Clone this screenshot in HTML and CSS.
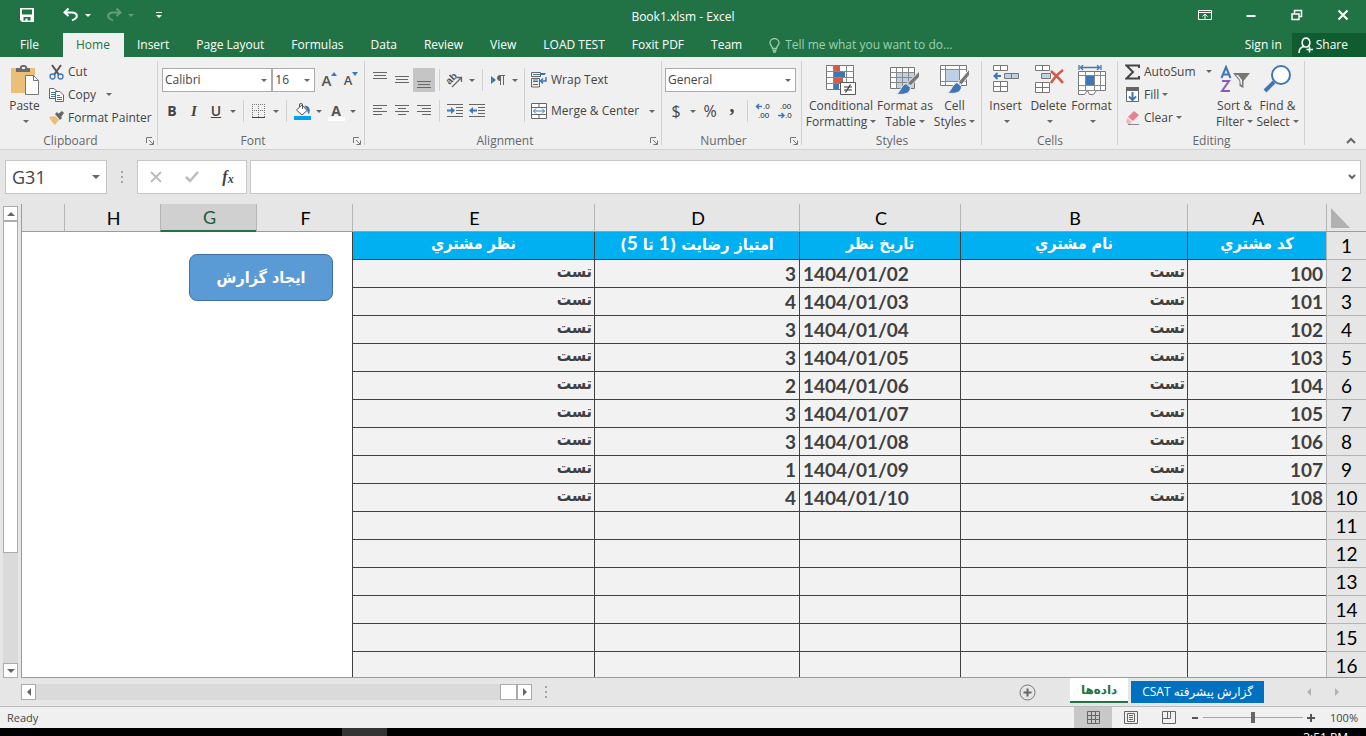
FILE: index.html
```html
<!DOCTYPE html>
<html lang="en">
<head>
  <meta charset="UTF-8" />
  <meta name="viewport" content="width=device-width, initial-scale=1" />
  <title>Book1.xlsm - Excel</title>
  <link rel="stylesheet" href="styles.css">
</head>
<body>
  <header class="top">
    <div class="titlebar">
      <div class="quick">
        <button aria-label="Save"><svg width="16" height="16" viewBox="0 0 16 16"><path fill="#fff" fill-rule="evenodd" d="M1 1h14v14H3L1 13zM3 2.500v5h10v-5zM4.500 10v3.500h2V11.500h2v2h3V10z"/></svg></button>
        <button class="undo" aria-label="Undo"><svg width="18" height="16" viewBox="0 0 18 16"><path fill="none" stroke="#fff" stroke-width="2" d="M6.500 1.500L2.500 5.500l4 3.500M3 5.500h7c5 0 6 4 3.500 6L10 13.500"/></svg></button>
        <button class="drop" aria-label="Undo list"><i class="caret"></i></button>
        <button class="faded redo" aria-label="Redo"><svg width="18" height="16" viewBox="0 0 18 16"><path fill="none" stroke="#fff" stroke-width="2" d="M11.500 1.500l4 4-4 3.500M15 5.500H8c-5 0-6 4-3.500 6L8 13.500"/></svg></button>
        <button class="drop faded" aria-label="Redo list"><i class="caret"></i></button>
        <button class="custom" aria-label="Customize toolbar"><svg width="8" height="8" viewBox="0 0 8 8"><path fill="#fff" d="M1 1h6v1H1zM1 4h6L4 7z"/></svg></button>
      </div>
      <div class="doc-name">Book1.xlsm - Excel</div>
      <div class="window-buttons">
        <button aria-label="Ribbon display"><svg width="14" height="12" viewBox="0 0 14 12"><path fill="none" stroke="#fff" d="M.5 1.500h13v9H.5zM.5 3.500h13M7 10V5.500M4.500 7.500L7 5l2.500 2.500"/></svg></button>
        <button aria-label="Minimize"><svg width="10" height="10" viewBox="0 0 10 10"><path fill="#fff" d="M.5 5h9v2h-9z"/></svg></button>
        <button aria-label="Restore"><svg width="12" height="12" viewBox="0 0 12 12"><path fill="none" stroke="#fff" stroke-width="1.500" d="M1 5h7v5.500H1zM3.500 5V1.500h7v6H8"/></svg></button>
        <button aria-label="Close"><svg width="12" height="12" viewBox="0 0 12 12"><path stroke="#fff" stroke-width="2" d="M1.500 1.500l9 9M10.500 1.500l-9 9"/></svg></button>
      </div>
    </div>

    <nav class="tabs">
      <button class="file">File</button>
      <button class="active">Home</button>
      <button>Insert</button>
      <button>Page Layout</button>
      <button>Formulas</button>
      <button>Data</button>
      <button>Review</button>
      <button>View</button>
      <button>LOAD TEST</button>
      <button>Foxit PDF</button>
      <button>Team</button>
      <button class="tell"><svg width="11" height="15" viewBox="0 0 11 15"><path fill="none" stroke="#9fd0b2" stroke-width="1.300" d="M3.500 10.500C3.500 8 1 7.500 1 5a4.500 4.300 0 0 1 9 0c0 2.500-2.500 3-2.500 5.500zM3.500 12.500h4M4 14.200h3"/></svg>Tell me what you want to do...</button>
      <button class="signin">Sign in</button>
      <button class="share"><svg width="16" height="17" viewBox="0 0 16 17"><path fill="none" stroke="#fff" stroke-width="1.500" d="M1 16c0-4 2-6 5-6.500M8 1a4 4.500 0 0 1 2 8.300M8 1a4 4.500 0 0 0-2 8.300c1 .7 3 .7 4 0M11.500 9.500v6M8.500 12.500h6.500"/></svg>Share</button>
    </nav>
  </header>

  <section class="ribbon" aria-label="Ribbon">
    <div class="group clipboard">
      <div class="group-body">
        <button class="big paste">
          <svg width="30" height="30" viewBox="0 0 30 30"><path fill="#eac078" d="M1 3h24v25H1z"/><path fill="#6b6b6b" d="M6 7V3h4V1.500L12 0h3l2 1.500V3h3v4z"/><path fill="#f0f0f0" d="M12 2h3v2h-3z"/><path fill="#fff" stroke="#777" d="M15.500 10.500h8l5 5v14h-13z"/><path fill="none" stroke="#777" d="M23.500 10.500v5h5"/></svg>
          <span>Paste</span><span><i class="caret"></i></span>
        </button>
        <div class="stack">
          <button class="small"><svg width="15" height="16" viewBox="0 0 15 16"><path stroke="#555" stroke-width="2" d="M3 1l7 10M12 1L5 11"/><circle cx="3.500" cy="12.500" r="2.500" fill="none" stroke="#3f77b5" stroke-width="1.300"/><circle cx="11.500" cy="12.500" r="2.500" fill="none" stroke="#3f77b5" stroke-width="1.300"/></svg>Cut</button>
          <button class="small"><svg width="15" height="16" viewBox="0 0 15 16"><path fill="#fff" stroke="#666" d="M.5 1.500H5l2.500 2.500v7.500h-7z"/><path stroke="#3f77b5" d="M2 5.500h4M2 7.500h4M2 9.500h4"/><path fill="#fff" stroke="#666" d="M6.500 4.500H11L14.500 8v6.500h-8z"/><path stroke="#3f77b5" d="M8 8.500h3M8 10.500h5M8 12.500h5"/></svg>Copy<i class="caret far"></i></button>
          <button class="small"><svg width="15" height="16" viewBox="0 0 15 16"><path fill="#eac078" d="M0 7l6-1 4 4-4 5-3-3z"/><path fill="#666" d="M6 4l2-2 5 6-2 2zM9 4l4-3 2 2-3 4z"/></svg>Format Painter</button>
        </div>
      </div>
      <div class="group-label">Clipboard<button class="launch" aria-label="Clipboard settings"><svg width="8" height="8" viewBox="0 0 8 8"><path fill="none" stroke="#777" d="M.5 6V.5H6M3 3l4 4M7.500 3.500v4h-4"/></svg></button></div>
    </div>

    <div class="group font">
      <div class="group-body rows">
        <div class="row">
          <span class="pick face"><select aria-label="Font"><option>Calibri</option></select></span><span class="pick size"><select aria-label="Font size"><option>16</option></select></span>
          <button class="ico grow" aria-label="Increase font size">A<svg width="6" height="4" viewBox="0 0 6 4"><path fill="#3f77b5" d="M0 4l3-4 3 4z"/></svg></button>
          <button class="ico shrink" aria-label="Decrease font size">A<svg width="6" height="4" viewBox="0 0 6 4"><path fill="#3f77b5" d="M0 0l3 4 3-4z"/></svg></button>
        </div>
        <div class="row">
          <button class="ico bold" aria-label="Bold">B</button><button class="ico italic" aria-label="Italic">I</button><button class="ico under" aria-label="Underline">U</button><button class="drop" aria-label="Underline styles"><i class="caret"></i></button>
          <i class="sep"></i>
          <button class="ico" aria-label="Borders"><svg width="14" height="14" viewBox="0 0 14 14"><path fill="none" stroke="#777" stroke-dasharray="1 1" d="M.5 0v13M6.500 0v13M12.500 0v13M0 .5h13M0 6.500h13"/><path stroke="#444" d="M0 13.500h13"/></svg></button><button class="drop" aria-label="Border styles"><i class="caret"></i></button>
          <i class="sep"></i>
          <button class="ico" aria-label="Fill color"><svg width="17" height="17" viewBox="0 0 17 17"><path fill="#3f77b5" d="M10 3c5-1 7 3 5 8-2-1-1-5-5-8z"/><path fill="#fff" stroke="#555" d="M2.500 7l5.500-5 5 5.500L8 12z"/><path fill="none" stroke="#555" d="M5.500 4V1Q7 0 8.500 1v5"/><path fill="#00a2ed" d="M0 13h17v4H0z"/></svg></button><button class="drop" aria-label="Fill colors"><i class="caret"></i></button>
          <button class="ico color" aria-label="Font color">A</button><button class="drop" aria-label="Font colors"><i class="caret"></i></button>
        </div>
      </div>
      <div class="group-label">Font<button class="launch" aria-label="Font settings"><svg width="8" height="8" viewBox="0 0 8 8"><path fill="none" stroke="#777" d="M.5 6V.5H6M3 3l4 4M7.500 3.500v4h-4"/></svg></button></div>
    </div>

    <div class="group alignment">
      <div class="group-body">
        <div class="rows">
          <div class="row">
            <button class="ico" aria-label="Top align"><svg width="14" height="16" viewBox="0 0 14 16"><path stroke="#666" d="M0 .5h14M1 3.500h12M0 6.500h14"/></svg></button><button class="ico" aria-label="Middle align"><svg width="14" height="16" viewBox="0 0 14 16"><path stroke="#666" d="M0 4.500h14M1 7.500h12M0 10.500h14"/></svg></button><button class="ico on" aria-label="Bottom align"><svg width="14" height="16" viewBox="0 0 14 16"><path stroke="#666" d="M0 9.500h14M1 12.500h12M0 15.500h14"/></svg></button>
            <i class="sep"></i>
            <button class="ico" aria-label="Orientation"><svg width="20" height="20" viewBox="0 0 20 20"><text x="2" y="11" class="ab" transform="rotate(-45 8 10)">ab</text><path fill="none" stroke="#666" stroke-width="1.300" d="M7 17L16 8M12 7.500h4.500V12"/></svg></button><button class="drop" aria-label="Orientation list"><i class="caret"></i></button>
            <i class="sep"></i>
            <button class="ico" aria-label="Text direction"><svg width="14" height="12" viewBox="0 0 14 12"><path fill="#3f77b5" d="M0 2l5 4-5 4z"/><path fill="#666" d="M9 7C5 7 5 1 9 1h5v1h-1v9h-1V2h-2v9H9z"/></svg></button><button class="drop" aria-label="Text direction list"><i class="caret"></i></button>
          </div>
          <div class="row">
            <button class="ico" aria-label="Align left"><svg width="14" height="12" viewBox="0 0 14 12"><path stroke="#666" d="M0 .5h14M0 3.500h9M0 6.500h14M0 9.500h9"/></svg></button><button class="ico" aria-label="Center"><svg width="14" height="12" viewBox="0 0 14 12"><path stroke="#666" d="M0 .5h14M3 3.500h8M0 6.500h14M3 9.500h8"/></svg></button><button class="ico" aria-label="Align right"><svg width="14" height="12" viewBox="0 0 14 12"><path stroke="#666" d="M0 .5h14M5 3.500h9M0 6.500h14M5 9.500h9"/></svg></button>
            <i class="sep"></i>
            <button class="ico" aria-label="Decrease indent"><svg width="16" height="14" viewBox="0 0 16 14"><path stroke="#666" d="M0 .5h16M9 3.500h7M9 6.500h7M9 9.500h7M0 12.500h16"/><path fill="#3f77b5" d="M0 5.500h4V3l4 3.500L4 10V7.500H0z"/></svg></button><button class="ico" aria-label="Increase indent"><svg width="16" height="14" viewBox="0 0 16 14"><path stroke="#666" d="M0 .5h16M9 3.500h7M9 6.500h7M9 9.500h7M0 12.500h16"/><path fill="#3f77b5" d="M8 5.500H4V3L0 6.500 4 10V7.500h4z"/></svg></button>
          </div>
        </div>
        <div class="rows wrap">
          <button class="small"><svg width="16" height="16" viewBox="0 0 16 16"><path fill="none" stroke="#666" d="M.5.500h9v4h-9zM.5 6.500h8v8.500h-8zM9.500 1.500h5M2 9.500h5M2 12.500h5"/><path stroke="#3f77b5" d="M2 2.500h12M2 8h5"/><path fill="none" stroke="#3f77b5" stroke-width="1.500" d="M15 5v4h-5M12 6.500L9.500 9l2.500 2.500"/></svg>Wrap Text</button>
          <button class="small"><svg width="16" height="16" viewBox="0 0 16 16"><path fill="#fff" stroke="#666" d="M.5.5h15v15H.5zM.5 4.500h15M.5 11.500h15M8 .5v4M8 11.500v4"/><path fill="none" stroke="#3f77b5" d="M2.500 8h11M5 5.500L2.500 8 5 10.500M11 5.500L13.500 8 11 10.500"/></svg>Merge &amp; Center<i class="caret far"></i></button>
        </div>
      </div>
      <div class="group-label">Alignment<button class="launch" aria-label="Alignment settings"><svg width="8" height="8" viewBox="0 0 8 8"><path fill="none" stroke="#777" d="M.5 6V.5H6M3 3l4 4M7.500 3.500v4h-4"/></svg></button></div>
    </div>

    <div class="group number">
      <div class="group-body rows">
        <div class="row"><span class="pick format"><select aria-label="Number format"><option>General</option></select></span></div>
        <div class="row">
          <button class="ico sign" aria-label="Accounting format">$</button><button class="drop" aria-label="Currency list"><i class="caret"></i></button><button class="ico sign" aria-label="Percent">%</button><button class="ico comma" aria-label="Comma style">,</button>
          <i class="sep"></i>
          <button class="ico" aria-label="Increase decimal"><svg width="18" height="20" viewBox="0 0 18 20"><text x="9" y="8" class="dec">.0</text><text x="4" y="17" class="dec">.00</text><path fill="none" stroke="#3f77b5" stroke-width="1.500" d="M8 5.500H2M5 3L2.500 5.500 5 8"/></svg></button><button class="ico" aria-label="Decrease decimal"><svg width="18" height="20" viewBox="0 0 18 20"><text x="4" y="8" class="dec">.00</text><text x="9" y="17" class="dec">.0</text><path fill="none" stroke="#3f77b5" stroke-width="1.500" d="M2 14.500h6M5.500 12L8 14.500 5.500 17"/></svg></button>
        </div>
      </div>
      <div class="group-label">Number<button class="launch" aria-label="Number settings"><svg width="8" height="8" viewBox="0 0 8 8"><path fill="none" stroke="#777" d="M.5 6V.5H6M3 3l4 4M7.500 3.500v4h-4"/></svg></button></div>
    </div>

    <div class="group styles">
      <div class="group-body">
        <button class="big">
          <svg width="30" height="30" viewBox="0 0 30 30"><path fill="#fff" stroke="#777" d="M.5.500h27v24H.5z"/><path fill="#d35b45" d="M8 1h6v5H8zM8 12h9v6H8z"/><path fill="#3f77b5" d="M8 7h11v5H8zM8 18h5v6H8z"/><path fill="none" stroke="#888" d="M.5 6.500h27M.5 12.500h27M.5 18.500h27M7.500.5v24M20.500.5v24"/><path fill="#fff" stroke="#555" d="M14.500 17.500h15v12h-15z"/><path stroke="#333" stroke-width="1.200" d="M18 22h8M18 25h8M24.500 19.500l-5 8"/></svg>
          <span>Conditional</span><span>Formatting<i class="caret"></i></span>
        </button>
        <button class="big">
          <svg width="30" height="30" viewBox="0 0 30 30"><path fill="#fff" stroke="#777" d="M.5 2.500h24v21H.5z"/><path fill="#bdd0e6" d="M7 8h17v15H7z"/><path fill="none" stroke="#888" d="M.5 7.500h24M.5 12.500h24M.5 17.500h24M6.500 2.500v21M12.500 2.500v21M18.500 2.500v21"/><path fill="#777" stroke="#f0f0f0" d="M29.500 6v6l-9 9-3-3z"/><path fill="#3f77b5" stroke="#f0f0f0" d="M16 18.500l4.500 4c0 7-8 7.500-14 6.500 4-2 4-8 9.500-10.500z"/></svg>
          <span>Format as</span><span>Table<i class="caret"></i></span>
        </button>
        <button class="big">
          <svg width="30" height="30" viewBox="0 0 30 30"><path fill="#fff" stroke="#777" d="M.5.500h26v20H.5z"/><path fill="none" stroke="#888" d="M.5 4.500h26M.5 16.500h26M5.500.5v20M19.500.5v20"/><path fill="#bdd0e6" d="M6 5h13v11H6z"/><path fill="#777" stroke="#f0f0f0" d="M29.500 4v6l-8 10-3-3z"/><path fill="#3f77b5" stroke="#f0f0f0" d="M17 17.500l4.500 4c0 7-8 7.500-14 6.500 4-2 4-8 9.500-10.500z"/></svg>
          <span>Cell</span><span>Styles<i class="caret"></i></span>
        </button>
      </div>
      <div class="group-label">Styles</div>
    </div>

    <div class="group cells">
      <div class="group-body">
        <button class="big">
          <svg width="28" height="30" viewBox="0 0 28 30"><path fill="#fff" stroke="#777" d="M1.500.5h14v5h-14zM8.500.5v5M1.500 16.500h14v10h-14zM8.500 16.500v10M1.500 21.500h14"/><path fill="#bdd0e6" stroke="#777" d="M12.500 8.500h14v5h-14zM19.500 8.500v5"/><path fill="none" stroke="#3f77b5" stroke-width="2" d="M9 11H3M5.500 8L2.500 11l3 3"/></svg>
          <span>Insert</span><span><i class="caret"></i></span>
        </button>
        <button class="big">
          <svg width="30" height="30" viewBox="0 0 30 30"><path fill="#fff" stroke="#777" d="M1.500.5h14v5h-14zM8.500.5v5M1.500 17.500h14v10h-14zM8.500 17.500v10M1.500 22.500h14"/><path fill="#bdd0e6" stroke="#777" d="M7.500 8.500h9v5h-9z"/><path stroke="#d35b45" stroke-width="2.500" d="M17 6c3 3 8 7 12 12M29 5c-4 3-9 8-12 13"/></svg>
          <span>Delete</span><span><i class="caret"></i></span>
        </button>
        <button class="big">
          <svg width="30" height="30" viewBox="0 0 30 30"><path fill="none" stroke="#3f77b5" stroke-width="1.300" d="M2 0v5M24 0v5M3 2.500h20M6 0L3.500 2.500 6 5M20 0l2.500 2.500L20 5"/><path fill="#fff" stroke="#777" d="M1.500 6.500h27v19h-9l-3 4h-4l-2-4-3 4h-6z"/><path fill="none" stroke="#888" d="M1.500 10.500h27M1.500 20.500h27M1.500 25.500h18M8.500 6.500v19M17.500 6.500v19M23.500 6.500v19"/><path fill="#3f77b5" d="M9 11h8v9H9z"/></svg>
          <span>Format</span><span><i class="caret"></i></span>
        </button>
      </div>
      <div class="group-label">Cells</div>
    </div>

    <div class="group editing">
      <div class="group-body">
        <div class="stack">
          <button class="small"><svg width="15" height="16" viewBox="0 0 15 16"><path fill="none" stroke="#444" stroke-width="2" d="M14 4V1.500H1.500L8 8l-6.500 6.500H14V12"/></svg>AutoSum<i class="caret far"></i></button>
          <button class="small"><svg width="15" height="16" viewBox="0 0 15 16"><path fill="#fff" stroke="#666" d="M1.500.5h12v14h-12z"/><path fill="#666" d="M1 0h13v4H1z"/><path fill="none" stroke="#3f77b5" stroke-width="2" d="M7.500 5v8M4 9.500l3.500 3.500L11 9.500"/></svg>Fill<i class="caret"></i></button>
          <button class="small"><svg width="15" height="16" viewBox="0 0 15 16"><path fill="#e8808f" d="M9 1l5 4-6 6-5-4z"/><path fill="#f3b4bc" d="M2 8l5 4-2 2H3l-2-2z"/><path stroke="#888" d="M3 14.500h11"/></svg>Clear<i class="caret"></i></button>
        </div>
        <button class="big">
          <svg width="30" height="30" viewBox="0 0 30 30"><path fill="none" stroke="#3f77b5" stroke-width="2" d="M1.500 13L6 2l4.500 11M3 9.500h6"/><path fill="none" stroke="#8a5bb5" stroke-width="2" d="M2 16h7L2 26h8"/><path fill="#777" d="M13 8h17l-6.500 8v7l-4-2v-5z"/><path fill="#f0f0f0" d="M20 15l-4-5h2l4 5v5h-1z"/></svg>
          <span>Sort &amp;</span><span>Filter<i class="caret"></i></span>
        </button>
        <button class="big">
          <svg width="30" height="30" viewBox="0 0 30 30"><path stroke="#3f77b5" stroke-width="4" d="M2 26L11 17"/><circle cx="18" cy="10" r="9" fill="#fff" stroke="#3f77b5" stroke-width="2"/></svg>
          <span>Find &amp;</span><span>Select<i class="caret"></i></span>
        </button>
      </div>
      <div class="group-label">Editing</div>
    </div>
    <button class="collapse" aria-label="Collapse ribbon"><svg width="10" height="7" viewBox="0 0 10 7"><path fill="none" stroke="#666" stroke-width="2" d="M1 6l4-4 4 4"/></svg></button>
  </section>

  <section class="formula-bar">
    <div class="name-box"><input type="text" value="G31" aria-label="Name box"><button aria-label="Names"><i class="caret wide"></i></button></div>
    <i class="dots"></i>
    <div class="fx">
      <button aria-label="Cancel"><svg width="12" height="12" viewBox="0 0 12 12"><path stroke="#bdbdbd" stroke-width="2" d="M1 1l10 10M11 1L1 11"/></svg></button>
      <button aria-label="Enter"><svg width="14" height="12" viewBox="0 0 14 12"><path fill="none" stroke="#bdbdbd" stroke-width="2.500" d="M1 6l4 4 8-9"/></svg></button>
      <button class="fn" aria-label="Insert function">f<small>x</small></button>
    </div>
    <div class="formula"><input type="text" aria-label="Formula"><button aria-label="Expand formula bar"><svg width="8" height="6" viewBox="0 0 8 6"><path fill="none" stroke="#666" stroke-width="2" d="M1 1l3 3 3-3"/></svg></button></div>
  </section>

  <main class="workspace">
    <div class="vscroll">
      <button aria-label="Scroll up"><i class="caret up"></i></button>
      <div class="vthumb"></div>
      <div class="vtrack"></div>
      <button aria-label="Scroll down"><i class="caret wide"></i></button>
    </div>
    <div class="sheet">
      <table dir="rtl">
        <colgroup><col class="w-head"><col class="w-a"><col class="w-b"><col class="w-c"><col class="w-d"><col class="w-e"><col class="w-f"><col class="w-f"><col class="w-f"><col></colgroup>
        <thead>
          <tr><th class="corner"><svg width="20" height="20" viewBox="0 0 20 20"><path fill="#b1b1b1" d="M0 0l19 20H0z"/></svg></th><th>A</th><th>B</th><th>C</th><th>D</th><th>E</th><th>F</th><th class="current">G</th><th>H</th><th></th></tr>
        </thead>
        <tbody>
          <tr class="fields"><th>1</th><td>كد مشتري</td><td>نام مشتري</td><td>تاريخ نظر</td><td>امتياز رضايت (<b>1</b> تا <b>5</b>)</td><td>نظر مشتري</td><td class="off" colspan="4" rowspan="16"></td></tr>
          <tr><th>2</th><td class="num">100</td><td>تست</td><td class="num date">1404/01/02</td><td class="num">3</td><td>تست</td></tr>
          <tr><th>3</th><td class="num">101</td><td>تست</td><td class="num date">1404/01/03</td><td class="num">4</td><td>تست</td></tr>
          <tr><th>4</th><td class="num">102</td><td>تست</td><td class="num date">1404/01/04</td><td class="num">3</td><td>تست</td></tr>
          <tr><th>5</th><td class="num">103</td><td>تست</td><td class="num date">1404/01/05</td><td class="num">3</td><td>تست</td></tr>
          <tr><th>6</th><td class="num">104</td><td>تست</td><td class="num date">1404/01/06</td><td class="num">2</td><td>تست</td></tr>
          <tr><th>7</th><td class="num">105</td><td>تست</td><td class="num date">1404/01/07</td><td class="num">3</td><td>تست</td></tr>
          <tr><th>8</th><td class="num">106</td><td>تست</td><td class="num date">1404/01/08</td><td class="num">3</td><td>تست</td></tr>
          <tr><th>9</th><td class="num">107</td><td>تست</td><td class="num date">1404/01/09</td><td class="num">1</td><td>تست</td></tr>
          <tr><th>10</th><td class="num">108</td><td>تست</td><td class="num date">1404/01/10</td><td class="num">4</td><td>تست</td></tr>
          <tr><th>11</th><td></td><td></td><td></td><td></td><td></td></tr>
          <tr><th>12</th><td></td><td></td><td></td><td></td><td></td></tr>
          <tr><th>13</th><td></td><td></td><td></td><td></td><td></td></tr>
          <tr><th>14</th><td></td><td></td><td></td><td></td><td></td></tr>
          <tr><th>15</th><td></td><td></td><td></td><td></td><td></td></tr>
          <tr><th>16</th><td></td><td></td><td></td><td></td><td></td></tr>
        </tbody>
      </table>
      <button class="report" dir="rtl">ايجاد گزارش</button>
    </div>
  </main>

  <section class="sheet-bar">
    <div class="hscroll">
      <button aria-label="Scroll left"><i class="caret left"></i></button>
      <div class="htrack"></div>
      <div class="hthumb"></div>
      <button aria-label="Scroll right"><i class="caret right"></i></button>
    </div>
    <i class="dots"></i>
    <button class="add" aria-label="New sheet"><svg width="17" height="17" viewBox="0 0 17 17"><circle cx="8.500" cy="8.500" r="7.500" fill="none" stroke="#777"/><path stroke="#666" stroke-width="2" d="M4.500 8.500h8M8.500 4.500v8"/></svg></button>
    <button class="sheet-tab active" dir="rtl">داده‌ها</button>
    <button class="sheet-tab blue" dir="rtl">گزارش پیشرفته CSAT</button>
    <div class="sheet-nav">
      <button aria-label="Previous sheet"><i class="caret left"></i></button>
      <button aria-label="Next sheet"><i class="caret right"></i></button>
    </div>
  </section>

  <footer class="status">
    <span class="ready">Ready</span>
    <button class="view on" aria-label="Normal view"><svg width="13" height="13" viewBox="0 0 13 13"><path fill="none" stroke="#666" d="M.5.5h12v12H.5zM.5 4.500h12M.5 8.500h12M4.500.5v12M8.500.5v12"/></svg></button>
    <button class="view" aria-label="Page layout view"><svg width="14" height="13" viewBox="0 0 14 13"><path fill="none" stroke="#666" d="M.5.5h13v12H.5zM3.500 2.500h7v8h-7zM5 4.500h4M5 6.500h4M5 8.500h4"/></svg></button>
    <button class="view" aria-label="Page break preview"><svg width="14" height="13" viewBox="0 0 14 13"><path fill="none" stroke="#666" d="M.5.5h13v12H.5zM.5 7.500h8M5.500.5v7M8.500.5v7"/></svg></button>
    <button class="zoom" aria-label="Zoom out"><svg width="7" height="8" viewBox="0 0 7 8"><path fill="#555" d="M0 3h6v2H0z"/></svg></button>
    <input type="range" min="0" max="100" value="50" aria-label="Zoom">
    <button class="zoom" aria-label="Zoom in"><svg width="8" height="8" viewBox="0 0 8 8"><path fill="#555" d="M0 3h3V0h2v3h3v2H5v3H3V5H0z"/></svg></button>
    <span class="percent">100%</span>
  </footer>
  <div class="taskbar"><i class="task"></i><span class="clock">3:51 PM</span></div>
</body>
</html>
```

FILE: styles.css
```css
* {
  margin: 0;
  padding: 0;
  box-sizing: border-box;
}
body {
  height: 100vh;
  display: flex;
  flex-direction: column;
  overflow: hidden;
  background: #e6e6e6;
  color: #444;
  font: 12px/16px "Open Sans", "Noto Sans", "DejaVu Sans", sans-serif;
}
button, input, select {
  font: inherit;
  color: inherit;
  border: none;
  background: none;
  outline: none;
}
button {
  display: flex;
  align-items: center;
  justify-content: center;
  white-space: nowrap;
}
svg {
  flex: none;
  display: block;
}

/* small triangles */
.caret {
  flex: none;
  display: inline-block;
  border: 3px solid transparent;
  border-top-color: #666;
  border-bottom: 0;
}
.caret.wide {
  border-width: 4px 4px 0;
}
.caret.up {
  border: 4px solid transparent;
  border-bottom-color: #666;
  border-top: 0;
}
.caret.left {
  border: 4px solid transparent;
  border-right-color: #666;
  border-left: 0;
}
.caret.right {
  border: 4px solid transparent;
  border-left-color: #666;
  border-right: 0;
}
.dots {
  width: 2px;
  height: 12px;
  background: repeating-linear-gradient(#a6a6a6 0 2px, transparent 2px 5px);
}

/* title bar and tabs */
.top {
  background: #217346;
  color: #fff;
}
.titlebar {
  display: grid;
  grid-template-columns: 1fr auto 1fr;
  height: 33px;
}
.quick {
  display: flex;
  padding: 0 0 4px 19px;
}
.quick .caret {
  border-top-color: #fff;
}
.undo {
  margin-left: 27px;
}
.drop {
  width: 12px;
}
.undo + .drop {
  margin-left: 2px;
}
.redo {
  margin-left: 11px;
}
.redo + .drop {
  margin-left: 2px;
}
.custom {
  margin-left: 18px;
}
.faded {
  opacity: 0.3;
}
.doc-name {
  line-height: 34px;
}
.window-buttons {
  display: flex;
  justify-content: flex-end;
}
.window-buttons button {
  width: 46px;
  height: 30px;
}
.tabs {
  display: flex;
  height: 24px;
}
.tabs button {
  padding: 0 14px 0 13px;
}
.tabs .file {
  padding: 0 24px 0 20px;
}
.tabs .active {
  background: #f0f0f0;
  color: #217346;
}
.tabs .tell {
  gap: 5px;
  color: #9fd0b2;
}
.tabs .signin {
  margin-left: auto;
  padding: 0 10px;
}
.tabs .share {
  gap: 2px;
  padding: 0 18px 0 6px;
  background: #0e5c2f;
}

/* ribbon */
.ribbon {
  display: flex;
  background: #f0f0f0;
  border-bottom: 1px solid #d2d2d2;
}
.group {
  position: relative;
  padding: 0 4px;
}
.group::after {
  content: "";
  position: absolute;
  right: 0;
  top: 4px;
  bottom: 4px;
  width: 1px;
  background: #d0d0d0;
}
.clipboard { width: 158px; padding: 0 3px; }
.font { width: 207px; padding: 0 3px; }
.alignment { width: 297px; }
.number { width: 140px; padding: 0 3px; }
.styles { width: 180px; padding: 0 3px; }
.cells { width: 136px; padding: 0 2px; }
.editing { width: 187px; }
.group-body {
  display: flex;
  height: 76px;
}
.rows {
  display: flex;
  flex-direction: column;
  gap: 7px;
  padding-top: 11px;
}
.row {
  display: flex;
  align-items: center;
  height: 24px;
}
.stack {
  display: flex;
  flex-direction: column;
  padding-top: 3px;
}
.small {
  height: 23px;
  gap: 4px;
  justify-content: flex-start;
}
.small .caret {
  margin-left: -1px;
}
.small .far {
  margin-left: 6px;
}
.group-label {
  display: flex;
  justify-content: center;
  height: 16px;
  color: #666;
}
.clipboard .group-label, .font .group-label, .alignment .group-label, .number .group-label {
  padding-right: 17px;
}
.launch {
  position: absolute;
  right: 4px;
  bottom: 4px;
}
.big {
  flex-direction: column;
  justify-content: flex-start;
  padding-top: 8px;
  width: 43px;
}
.big svg {
  height: 30px;
  margin-bottom: 3px;
}
.big span {
  height: 16px;
}
.big .caret {
  margin: 0 0 3px 3px;
}
.paste { margin-right: 3px; }
.styles .big:nth-child(1) { width: 72px; }
.styles .big:nth-child(2) { width: 56px; }
.editing .stack { width: 91px; padding-left: 3px; }
.sep {
  width: 1px;
  height: 22px;
  margin: 0 4px;
  background: #d0d0d0;
}
.pick {
  position: relative;
  height: 24px;
  border: 1px solid #ababab;
  background: #fff;
}
.pick::after {
  content: "";
  position: absolute;
  right: 4px;
  top: 10px;
  border: 3px solid transparent;
  border-top-color: #666;
  border-bottom: 0;
  pointer-events: none;
}
.pick select {
  appearance: none;
  width: 100%;
  height: 100%;
  padding-left: 2px;
}
.face { width: 112px; margin-left: 1px; }
.size { width: 43px; }
.format { width: 131px; }
.ico {
  width: 22px;
  height: 24px;
  font-size: 14px;
}
.ico.on {
  background: #c5c5c5;
}
.grow, .shrink {
  color: #555;
  font-weight: 600;
}
.grow { font-size: 15px; margin-left: 4px; }
.shrink { font-size: 13px; }
.grow svg, .shrink svg {
  align-self: flex-start;
  margin-top: 4px;
}
.bold { font-weight: bold; }
.italic { font: italic bold 15px "Liberation Serif", serif; }
.under { text-decoration: underline; font-weight: 600; }
.color {
  font-weight: bold;
  color: #555;
  background: linear-gradient(#fff, #fff) center bottom 2px / 17px 4px no-repeat;
}
.sign { font-size: 16px; }
.comma { font: bold 20px/10px "Liberation Serif", serif; padding-bottom: 12px; }
.ab { font: bold 10px "Liberation Sans", sans-serif; fill: #555; }
.dec { font: 8px "Liberation Sans", sans-serif; fill: #222; }
.wrap {
  margin-left: 3px;
  padding-left: 7px;
  background: linear-gradient(#d0d0d0, #d0d0d0) 0 11px / 1px 54px no-repeat;
}
.wrap .small {
  height: 24px;
}
.collapse {
  margin: auto 10px 5px auto;
}

/* formula bar */
.formula-bar {
  display: flex;
  align-items: center;
  padding: 10px 5px;
}
.name-box, .fx, .formula {
  display: flex;
  height: 34px;
  background: #fff;
  border: 1px solid #c6c6c6;
}
.name-box {
  width: 102px;
}
.name-box input {
  flex: 1;
  min-width: 0;
  padding-left: 6px;
  font-size: 18px;
}
.name-box button {
  width: 20px;
}
.formula-bar .dots {
  margin: 0 14px;
}
.fx button {
  width: 36px;
}
.fx .fn {
  font: italic bold 16px "Liberation Serif", serif;
}
.fx small {
  font-size: 12px;
  padding-top: 4px;
}
.formula {
  flex: 1;
  margin-left: 3px;
}
.formula input {
  flex: 1;
}
.formula button {
  width: 16px;
}

/* grid */
.workspace {
  flex: 1;
  min-height: 0;
  display: flex;
}
.vscroll {
  display: flex;
  flex-direction: column;
  width: 15px;
  margin: 2px 3px 0;
  background: #dadada;
}
.vscroll button, .vthumb {
  background: #fff;
  border: 1px solid #ababab;
}
.vscroll button {
  height: 15px;
}
.vthumb {
  flex: 3;
}
.vtrack {
  flex: 1;
}
.sheet {
  flex: 1;
  position: relative;
  overflow: hidden;
  border-left: 1px solid #9b9b9b;
  border-bottom: 1px solid #9b9b9b;
}
.sheet table {
  width: 100%;
  table-layout: fixed;
  border-collapse: separate;
  border-spacing: 0;
  font: 19px/24px Lato, sans-serif;
}
.w-head { width: 40px; }
.w-a { width: 139px; }
.w-b { width: 227px; }
.w-c { width: 161px; }
.w-d { width: 205px; }
.w-e { width: 242px; }
.w-f { width: 96px; }
.sheet th {
  height: 28px;
  font-weight: normal;
  color: #000;
  background: #e6e6e6;
  border-left: 1px solid #b5b5b5;
  border-bottom: 1px solid #9b9b9b;
}
.sheet thead th {
  padding-left: 2px;
  font-size: 18px;
}
.sheet th:last-child {
  border-left: 0;
}
.sheet .corner svg {
  margin: 0 15px 0 0;
}
.sheet th.current {
  background: #d0d0d0;
  color: #1d5c3a;
  border-bottom: 2px solid #217346;
}
.sheet tbody th {
  border-bottom-color: #b5b5b5;
}
.sheet td {
  height: 28px;
  padding: 0 2px 4px;
  text-align: right;
  font: bold 16px/20px "DejaVu Sans Condensed", "DejaVu Sans", sans-serif;
  color: #404040;
  background: #f2f2f2;
  border-left: 1px solid #404040;
  border-bottom: 1px solid #404040;
}
.sheet .fields td {
  text-align: center;
  color: #fff;
  background: #00b0f0;
}
.fields b {
  font: bold 19px/20px Lato, sans-serif;
}
.sheet td.off {
  background: #fff;
  border: 0;
}
.sheet td.num {
  padding: 0 3px;
  font: bold 19px/24px Lato, sans-serif;
}
.sheet td.date {
  text-align: left;
}
.report {
  position: absolute;
  left: 167px;
  top: 50px;
  width: 144px;
  height: 47px;
  border: 1px solid #41719c;
  border-radius: 8px;
  background: #5b9bd5;
  color: #fff;
  font: bold 16px/24px "DejaVu Sans Condensed", "DejaVu Sans", sans-serif;
}

/* sheet tabs */
.sheet-bar {
  display: flex;
  height: 28px;
  padding-left: 21px;
}
.hscroll {
  display: flex;
  width: 38%;
  margin: 6px 13px 6px 0;
  background: #dadada;
}
.hscroll button, .hthumb {
  width: 15px;
  background: #fff;
  border: 1px solid #ababab;
}
.hthumb {
  width: 17px;
}
.htrack {
  flex: 1;
}
.sheet-bar > .dots {
  margin-top: 8px;
}
.add {
  margin: 0 34px 0 auto;
}
.sheet-tab {
  padding: 0 11px;
}
.sheet-tab.active {
  height: 25px;
  margin-right: 3px;
  background: #fff;
  color: #217346;
  font-weight: bold;
  border-bottom: 2px solid #217346;
}
.sheet-tab.blue {
  height: 22px;
  margin-top: 3px;
  background: #0070c0;
  color: #fff;
}
.sheet-nav {
  display: flex;
  gap: 24px;
  margin: 0 27px 0 43px;
  opacity: 0.4;
}

/* status bar */
.status {
  display: flex;
  align-items: center;
  height: 22px;
  padding: 0 8px 0 7px;
  font-size: 11px;
  background: #f0f0f0;
  border-top: 1px solid #bdbdbd;
}
.ready {
  margin-right: auto;
}
.view {
  width: 38px;
  height: 21px;
}
.view.on {
  background: #c8c8c8;
}
.zoom {
  width: 15px;
}
.status input {
  appearance: none;
  width: 100px;
  height: 11px;
  background: linear-gradient(#a6a6a6, #a6a6a6) 0 5px / 100% 1px no-repeat;
}
.status input::-webkit-slider-thumb {
  appearance: none;
  width: 4px;
  height: 11px;
  background: #666;
}
.percent {
  margin-left: 12px;
}
.taskbar {
  display: flex;
  justify-content: space-between;
  height: 8px;
  overflow: hidden;
  background: #000;
  color: #fff;
}
.task {
  width: 45px;
  margin-left: 25%;
  background: #333;
}
.clock {
  margin: 2px 18px 0 0;
}
```
